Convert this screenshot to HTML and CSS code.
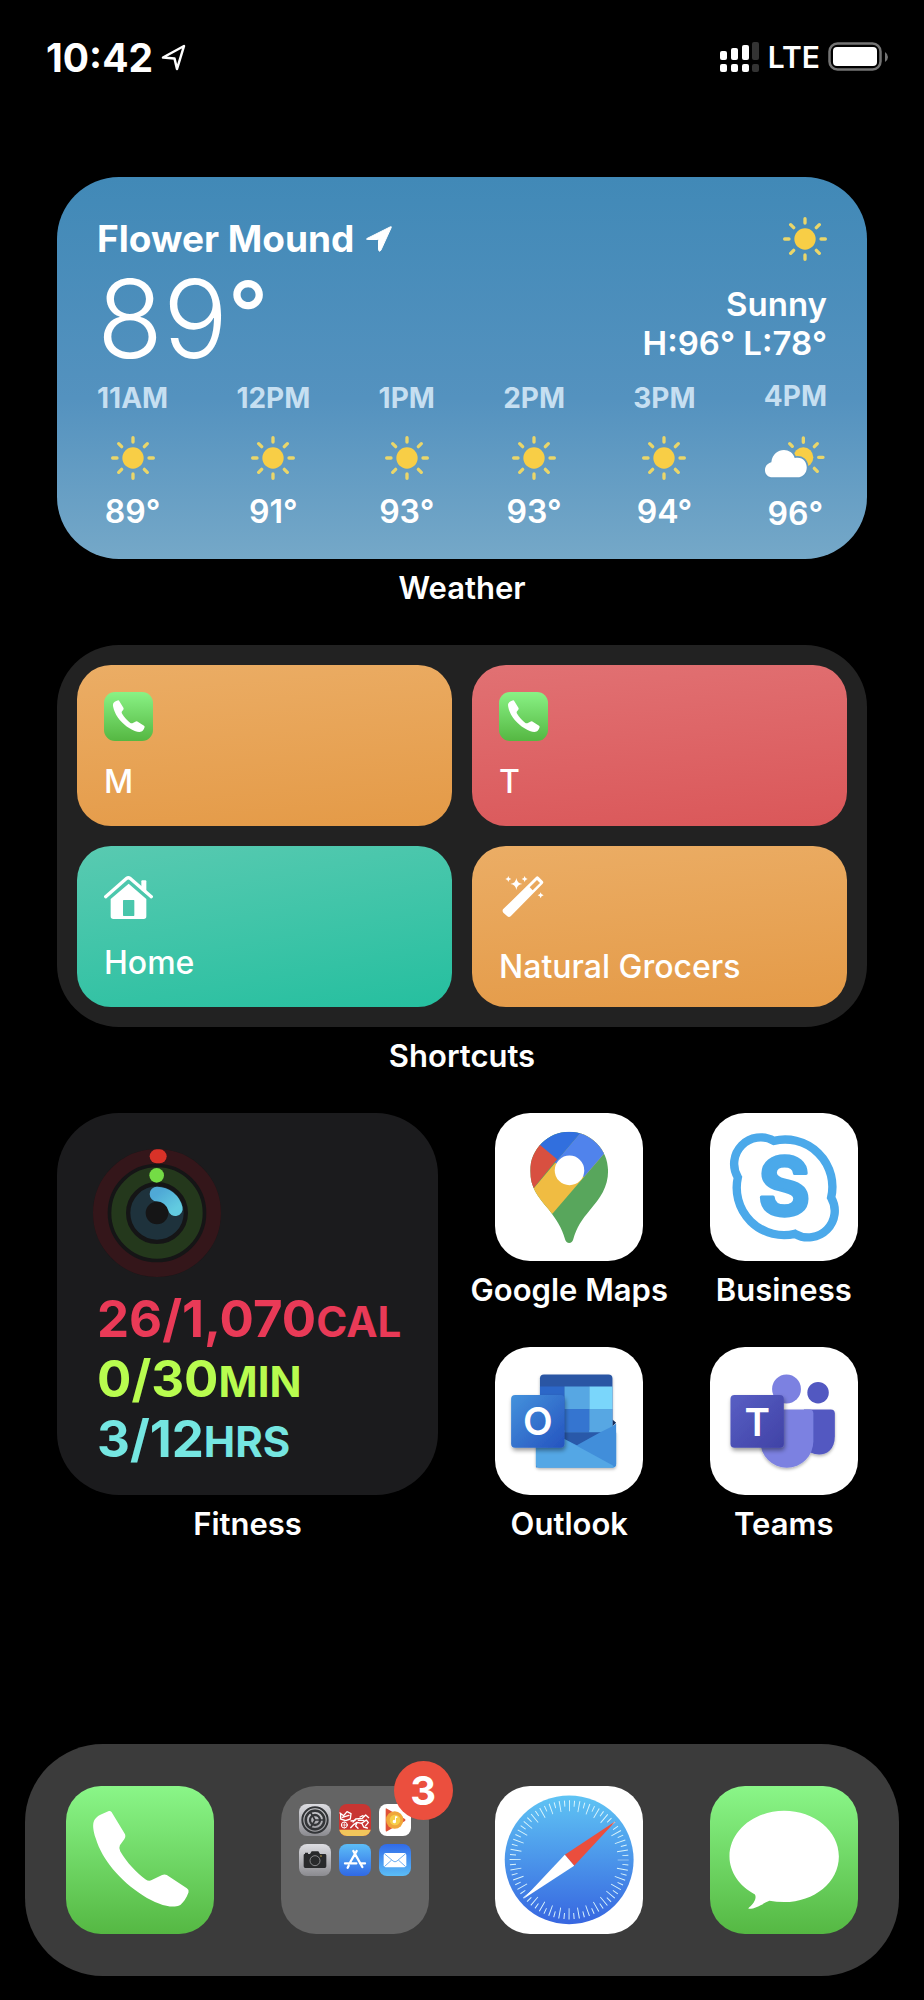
FILE: index.html
```html
<!DOCTYPE html>
<html lang="en">
<head>
  <meta charset="UTF-8" />
  <meta name="viewport" content="width=device-width, initial-scale=1.0"/>
  <title>Home Screen</title>
  <link rel="stylesheet" href="styles.css">
</head>
<body>
  <!-- shared shapes -->
  <svg class="defs" width="0" height="0" aria-hidden="true">
    <defs>
      <linearGradient id="safariBlue" x1="0" y1="0" x2="0" y2="1">
        <stop offset="0" stop-color="#5fc4f4"/>
        <stop offset="1" stop-color="#3766e0"/>
      </linearGradient>
      <linearGradient id="outlookBox" x1="0" y1="0" x2="1" y2="1">
        <stop offset="0" stop-color="#4492dc"/>
        <stop offset="1" stop-color="#2553bf"/>
      </linearGradient>
      <linearGradient id="teamsBox" x1="0" y1="0" x2="1" y2="1">
        <stop offset="0" stop-color="#585fc4"/>
        <stop offset="1" stop-color="#4042a6"/>
      </linearGradient>
      <linearGradient id="standRing" x1="0" y1="0" x2="1" y2="1">
        <stop offset="0" stop-color="#4fa9d6"/>
        <stop offset="1" stop-color="#62cbe0"/>
      </linearGradient>
      <filter id="boxShadow" x="-30%" y="-30%" width="160%" height="160%">
        <feDropShadow dx="3" dy="8" stdDeviation="7" flood-color="#000" flood-opacity="0.4"/>
      </filter>
      <filter id="baseShadow" x="-20%" y="-20%" width="140%" height="140%">
        <feDropShadow dx="0" dy="5" stdDeviation="4" flood-color="#000" flood-opacity="0.3"/>
      </filter>
      <clipPath id="pinShape">
        <path d="M327 96C391 96 443 148 443 212C443 262 419 293 389 329C364 359 350 379 339 417Q336 427 327 427Q318 427 315 417C304 379 290 359 265 326C233 288 211 262 211 212C211 148 263 96 327 96Z"/>
      </clipPath>
    </defs>
    <symbol id="sun" viewBox="0 0 132 132">
      <circle cx="66" cy="66" r="32" fill="#f8ce46"/>
      <path d="M66 5V18M66 114V127M5 66H18M114 66H127M23 23L32 32M100 100L109 109M109 23L100 32M23 109L32 100" stroke="#ead66a" stroke-width="10" stroke-linecap="round"/>
    </symbol>
    <symbol id="handset" viewBox="140 168 442 442">
      <path fill="#fff" d="M246 252L268 243Q272 241 276 246L315 310Q320 318 314 327L301 345Q297 353 302 363C322 398 350 426 378 447Q387 453 396 449L427 434Q434 430 441 434L501 473Q508 478 506 485C500 502 490 518 478 525C455 535 410 521 370 495C300 450 248 388 229 325C215 280 220 264 246 252Z"/>
    </symbol>
  </svg>

  <header class="status-bar">
    <div class="clock">
      <time>10:42</time>
      <svg width="25" height="27" viewBox="0 0 25 27"><path d="M2 13.500L23 2L16 25L13.500 14.500Z" fill="none" stroke="#fff" stroke-width="2.500" stroke-linejoin="round"/></svg>
    </div>
    <div class="signal">
      <svg width="40" height="30" viewBox="0 0 40 30">
        <g fill="#fff">
          <rect x="0" y="9" width="7" height="9" rx="2"/><rect x="11" y="6" width="7" height="12" rx="2"/><rect x="22" y="3" width="7" height="15" rx="2"/>
          <rect x="0" y="22" width="7" height="8" rx="2"/><rect x="11" y="22" width="7" height="8" rx="2"/><rect x="22" y="22" width="7" height="8" rx="2"/>
        </g>
        <g fill="#333"><rect x="32" y="0" width="7" height="18" rx="2"/><rect x="32" y="22" width="7" height="8" rx="2"/></g>
      </svg>
      <span>LTE</span>
      <svg width="61" height="30" viewBox="0 0 61 30">
        <rect x="1.500" y="1.500" width="51" height="26" rx="8" fill="none" stroke="#747474" stroke-width="2.500"/>
        <rect x="5" y="5" width="44" height="19" rx="4" fill="#fff"/>
        <path d="M57 10Q60 12 60 15Q60 18 57 20Z" fill="#747474"/>
      </svg>
    </div>
  </header>

  <main class="home">
    <section class="widget wide">
      <div class="widget-box weather">
        <div class="weather-top">
          <h1>Flower Mound
            <svg width="26" height="26" viewBox="0 0 26 26"><path d="M1 12.500L24 1Q26 0 25 2L15 24Q13 27 12.500 23V14.500Q12.500 13.500 11.500 13.500H3Q-1 13.500 1 12.500Z" fill="#fff" stroke="#fff" stroke-width="1"/></svg>
          </h1>
          <svg class="sun"><use href="#sun"/></svg>
        </div>
        <div class="weather-now">
          <div class="temperature">89<span class="degree">°</span></div>
          <div class="conditions">Sunny<br>H:96° L:78°</div>
        </div>
        <div class="hours">
          <div class="hour"><span>11AM</span><svg class="sun"><use href="#sun"/></svg><b>89°</b></div>
          <div class="hour"><span>12PM</span><svg class="sun"><use href="#sun"/></svg><b>91°</b></div>
          <div class="hour"><span>1PM</span><svg class="sun"><use href="#sun"/></svg><b>93°</b></div>
          <div class="hour"><span>2PM</span><svg class="sun"><use href="#sun"/></svg><b>93°</b></div>
          <div class="hour"><span>3PM</span><svg class="sun"><use href="#sun"/></svg><b>94°</b></div>
          <div class="hour"><span>4PM</span>
            <svg class="cloud" viewBox="918 788 180 144">
              <circle cx="1033" cy="858" r="30" fill="#f8ce46"/>
              <path d="M1033 800V813M992 817L1000 825M1075 817L1066 826M1079 858H1092M1066 891L1075 900" stroke="#ead66a" stroke-width="10" stroke-linecap="round"/>
              <path d="M941 918C912 918 910 880 937 873C942 828 997 825 1007 860C1052 850 1056 918 1014 918Z" fill="#fff" stroke="#629ac1" stroke-width="10" paint-order="stroke"/>
            </svg>
            <b>96°</b></div>
        </div>
      </div>
      <p class="caption">Weather</p>
    </section>

    <section class="widget wide">
      <div class="widget-box shortcuts">
        <button class="shortcut orange">
          <span class="phone-tile"><svg viewBox="0 0 49 49"><use href="#handset"/></svg></span>
          <span>M</span>
        </button>
        <button class="shortcut red">
          <span class="phone-tile"><svg viewBox="0 0 49 49"><use href="#handset"/></svg></span>
          <span>T</span>
        </button>
        <button class="shortcut teal">
          <svg class="glyph" viewBox="162 699 147 147">
            <path d="M274 750V724Q274 721 277 721H286Q289 721 289 724V762Z" fill="#fff"/>
            <path d="M167 770L230 715Q235 711 240 715L304 770" fill="none" stroke="#fff" stroke-width="10" stroke-linecap="round"/>
            <path fill-rule="evenodd" d="M236 731L289 777V829Q289 837 281 837H190Q182 837 182 829V777ZM221 780Q219 780 219 782V826Q219 828 221 828H251Q253 828 253 826V782Q253 780 251 780Z" fill="#fff"/>
          </svg>
          <span>Home</span>
        </button>
        <button class="shortcut orange">
          <svg class="glyph tall" viewBox="118 699 147 159">
            <g fill="#fff">
              <path fill-rule="evenodd" d="M130 808L229 711Q233 707 237 711L249 723Q253 727 249 731L153 829Q148 833 143 829L131 818Q127 813 130 808ZM210 742L219 751L241 729L232 720Z"/>
              <path d="M170 714Q172 730 188 732Q172 734 170 750Q168 734 152 732Q168 730 170 714Z"/>
              <path d="M146 708Q147 716 155 717Q147 718 146 726Q145 718 137 717Q145 716 146 708ZM195 708Q196 716 204 717Q196 718 195 726Q194 718 186 717Q194 716 195 708ZM243 757Q244 765 252 766Q244 767 243 775Q242 767 234 766Q242 765 243 757Z"/>
            </g>
          </svg>
          <span>Natural Grocers</span>
        </button>
      </div>
      <p class="caption">Shortcuts</p>
    </section>

    <section class="widget">
      <div class="widget-box fitness">
        <svg class="rings" viewBox="130 149 384 384" fill="none" stroke-linecap="round">
          <circle cx="322" cy="341" r="192" fill="#151516"/>
          <circle cx="322" cy="341" r="170" stroke="#34161a" stroke-width="44"/>
          <circle cx="322" cy="341" r="115" stroke="#24381c" stroke-width="44"/>
          <circle cx="322" cy="341" r="57" stroke="#1e323c" stroke-width="46"/>
          <path d="M321 171H330" stroke="#d93228" stroke-width="42"/>
          <circle cx="321" cy="228" r="22" fill="#74dc45"/>
          <path d="M322 284A57 57 0 0 1 377 328" stroke="url(#standRing)" stroke-width="44"/>
        </svg>
        <p class="move">26/1,070<small>CAL</small></p>
        <p class="exercise">0/30<small>MIN</small></p>
        <p class="stand">3/12<small>HRS</small></p>
      </div>
      <p class="caption">Fitness</p>
    </section>

    <a class="app" href="#">
      <svg class="icon white" viewBox="106 40 441 441">
        <g clip-path="url(#pinShape)">
          <rect x="200" y="80" width="260" height="360" fill="#58a65c"/>
          <path d="M360 100L290 183L200 290L277 340L432 160L450 80Z" fill="#f0bc42"/>
          <path d="M375 82L285 188L371 231L450 139V80Z" fill="#5083ec"/>
          <path d="M375 82L285 188L225 123V80Z" fill="#316fde"/>
          <path d="M242 137L291 178L205 283H190V110Z" fill="#d85040"/>
        </g>
        <circle cx="328" cy="211" r="44" fill="#fff"/>
      </svg>
      <span class="caption">Google Maps</span>
    </a>
    <a class="app" href="#">
      <svg class="icon white" viewBox="750 40 441 441">
        <path d="M833 232A79 79 0 0 1 940 123A141 141 0 0 1 1111 292A79 79 0 0 1 1003 400A141 141 0 0 1 833 232Z" fill="none" stroke="#4ba9ea" stroke-width="25"/>
        <text x="971" y="344" text-anchor="middle" class="logo-s">S</text>
      </svg>
      <span class="caption">Business</span>
    </a>
    <a class="app" href="#">
      <svg class="icon white" viewBox="106 52 441 441">
        <path d="M456 268L467 278L456 288Z" fill="#17305f"/>
        <g filter="url(#baseShadow)">
          <rect x="240" y="134" width="216" height="220" rx="12" fill="#2a57a4"/>
          <rect x="228" y="300" width="239" height="111" rx="10" fill="#54a7e5"/>
        </g>
        <path d="M240 170H313V306H240Z" fill="#2c67c8"/>
        <path d="M313 170H387V237H313Z" fill="#57a7e3"/>
        <path d="M387 170H456V237H387Z" fill="#7ad6fb"/>
        <path d="M313 237H387V306H313Z" fill="#3575d0"/>
        <path d="M387 237H456V306H387Z" fill="#57a7e3"/>
        <path d="M240 306H456V345H240Z" fill="#2959a9"/>
        <path d="M350 345L420 306L456 288L467 280V401Q467 411 457 411H228V285Z" fill="#418eda"/>
        <path d="M228 280L456 404Q462 408 457 411H238Q228 411 228 401Z" fill="#54a7e5"/>
        <rect x="154" y="195" width="159" height="157" rx="12" fill="url(#outlookBox)" filter="url(#boxShadow)"/>
        <text x="234" y="314" text-anchor="middle" class="logo-letter">O</text>
      </svg>
      <span class="caption">Outlook</span>
    </a>
    <a class="app" href="#">
      <svg class="icon white" viewBox="750 52 441 441">
        <circle cx="1072" cy="188" r="32" fill="#5258c1"/>
        <circle cx="978" cy="177" r="43" fill="#7c81e1"/>
        <g filter="url(#baseShadow)">
          <path d="M1030 238H1110Q1122 238 1122 250V318C1122 386 1052 382 1030 350Z" fill="#5258c1"/>
          <path d="M900 238H1046Q1058 238 1058 250V333A79 79 0 0 1 900 333Z" fill="#7c81e1"/>
        </g>
        <rect x="811" y="195" width="159" height="157" rx="12" fill="url(#teamsBox)" filter="url(#boxShadow)"/>
        <text x="891" y="317" text-anchor="middle" class="logo-letter">T</text>
      </svg>
      <span class="caption">Teams</span>
    </a>
  </main>

  <nav class="dock">
    <a class="app" href="#" aria-label="Phone">
      <svg class="icon green" viewBox="0 0 147 147"><use href="#handset"/></svg>
    </a>
    <a class="app" href="#" aria-label="Folder">
      <span class="icon folder">
        <svg class="mini grey" viewBox="0 0 96 96" fill="none" stroke="#333538">
          <circle cx="48" cy="48" r="38" stroke-width="6"/>
          <circle cx="48" cy="48" r="28" stroke-width="8"/>
          <circle cx="48" cy="48" r="15" stroke-width="7"/>
          <path d="M48 48H76M48 48L34 72M48 48L34 24" stroke-width="5"/>
          <circle cx="48" cy="48" r="33" stroke="#aaa" stroke-width="1"/>
        </svg>
        <svg class="mini coach" viewBox="0 0 96 96" fill="none" stroke="#fff" stroke-width="4" stroke-linecap="round" stroke-linejoin="round">
          <path d="M0 77H96V96H0Z" fill="#f1c65b" stroke="none"/>
          <path d="M3 27L14 35L24 23L36 29L34 45L20 50L5 45V28M10 40L30 34M36 51L48 49"/>
          <circle cx="16" cy="63" r="9" stroke-width="3"/>
          <path d="M16 54V72M7 63H25" stroke-width="2"/>
          <path d="M42 54L50 45L70 43L80 33L89 41M35 71L45 61L54 55L68 58L82 48L88 56L80 65M54 56L50 66L57 73M68 57L74 69L85 72M63 39L72 35M58 49H74"/>
        </svg>
        <svg class="mini white" viewBox="0 0 96 96">
          <path d="M20 15Q20 11 24 14L78 45Q81 48 78 51L24 82Q20 84 20 79Z" fill="#df5138"/>
          <circle cx="47" cy="48" r="26" fill="#f0a63a"/>
          <circle cx="48" cy="48" r="16" fill="#f6ce48"/>
          <path d="M48 53V37H55V42H51V53A5 5 0 1 1 48 48" fill="#fff"/>
        </svg>
        <svg class="mini grey" viewBox="0 0 96 96">
          <path d="M17 30H33L38 22H58L63 30H78Q82 30 82 34V67Q82 72 77 72H19Q14 72 14 67V34Q14 30 17 30ZM18 26H27V30H18Z" fill="#28292b"/>
          <circle cx="48" cy="50" r="15" fill="none" stroke="#b4b4b7" stroke-width="2"/>
          <circle cx="66" cy="36" r="2" fill="#f1bf45"/>
        </svg>
        <svg class="mini store" viewBox="0 0 96 96" fill="none" stroke="#fff" stroke-width="7" stroke-linecap="round">
          <path d="M43 21L70 69M53 21L34 54M29 65L26 71M18 58H52M63 58H78"/>
        </svg>
        <svg class="mini mail" viewBox="0 0 96 96">
          <rect x="14" y="27" width="68" height="43" rx="6" fill="#fff"/>
          <path d="M16 29L42 51Q48 56 54 51L80 29M16 68L38 48M80 68L58 48" fill="none" stroke="#6eaef0" stroke-width="3"/>
        </svg>
      </span>
      <span class="badge">3</span>
    </a>
    <a class="app" href="#" aria-label="Safari">
      <svg class="icon white" viewBox="106 168 441 441">
        <circle cx="327" cy="388" r="192" fill="url(#safariBlue)"/>
        <circle class="ticks" cx="327" cy="388" r="161" pathLength="360" stroke-width="33" stroke-dashoffset="0.500"/>
        <circle class="ticks" cx="327" cy="388" r="168" pathLength="360" stroke-width="18" stroke-dashoffset="5.500"/>
        <path d="M466 272L314 373L342 406Z" fill="#eb4e3d"/>
        <path d="M190 505L314 373L342 406Z" fill="#fff"/>
      </svg>
    </a>
    <a class="app" href="#" aria-label="Messages">
      <svg class="icon green" viewBox="750 168 441 441">
        <path d="M971 242C1061 242 1134 302 1134 378C1134 454 1061 514 971 514Q948 514 927 510C912 515 890 534 866 534Q862 533 867 529C880 519 890 502 884 491C838 467 808 424 808 378C808 302 881 242 971 242Z" fill="#fff"/>
      </svg>
    </a>
  </nav>
</body>
</html>
```
FILE: styles.css
```css
* {
  box-sizing: border-box;
}

body {
  margin: 0;
  min-height: 100vh;
  display: flex;
  flex-direction: column;
  background: #000;
  color: #fff;
  font-family: Inter, "Liberation Sans", sans-serif;
}

h1, p {
  margin: 0;
}

svg {
  display: block;
  flex-shrink: 0;
}

.defs {
  position: absolute;
}

/* status bar */
.status-bar {
  display: flex;
  justify-content: space-between;
  align-items: center;
  height: 114px;
  padding: 0 35px 0 46px;
}

.clock, .signal {
  display: flex;
  align-items: center;
  gap: 8px;
}

.clock {
  font-size: 39px;
  font-weight: 700;
}

.signal {
  font-size: 30px;
  font-weight: 600;
}

/* home grid */
.home {
  display: grid;
  grid-template-columns: repeat(4, 1fr);
  grid-auto-rows: 234px;
  padding: 63px 33px 0;
}

.widget {
  grid-column: span 2;
  grid-row: span 2;
  padding: 0 24px;
}

.wide {
  grid-column: span 4;
}

.widget-box {
  height: 382px;
  border-radius: 62px;
}

.caption {
  margin-top: 9px;
  font-size: 31px;
  line-height: 40px;
  font-weight: 600;
  text-align: center;
  white-space: nowrap;
}

/* weather */
.weather {
  padding: 40px 40px 0;
  background: linear-gradient(#4189b7, #5492bf 58%, #75a8c8);
}

.weather-top, .weather-now, .hours {
  display: flex;
  justify-content: space-between;
}

.weather-top {
  align-items: center;
}

.weather h1 {
  display: flex;
  align-items: center;
  gap: 12px;
  font-size: 37px;
  line-height: 44px;
}

.sun {
  width: 44px;
  height: 44px;
}

.temperature {
  font-size: 108px;
  line-height: 116px;
  font-weight: 300;
}

.degree {
  font-size: 88px;
  line-height: 1;
  font-weight: 500;
  vertical-align: 14px;
}

.conditions {
  padding-top: 24px;
  font-size: 33px;
  line-height: 39px;
  font-weight: 600;
  text-align: right;
}

.hours {
  align-items: center;
}

.hour {
  display: flex;
  flex-direction: column;
  align-items: center;
  font-size: 32px;
  line-height: 38px;
}

.hour span {
  margin-bottom: 19px;
  color: #c6dff1;
  font-size: 28px;
  font-weight: 700;
}

.hour b {
  margin-top: 13px;
  font-weight: 600;
}

.cloud {
  width: 60px;
  height: 48px;
}

/* shortcuts */
.shortcuts {
  display: grid;
  grid-template-columns: 1fr 1fr;
  grid-template-rows: 1fr 1fr;
  gap: 20px;
  padding: 20px;
  background: #222;
}

.shortcut {
  display: flex;
  flex-direction: column;
  align-items: flex-start;
  gap: 21px;
  padding: 27px 27px 16px;
  border: none;
  border-radius: 34px;
  color: #fff;
  font-family: inherit;
  font-size: 32px;
  line-height: 40px;
  font-weight: 500;
  cursor: pointer;
}

.orange {
  background: linear-gradient(175deg, #ebad65, #e49a47);
}

.red {
  background: linear-gradient(175deg, #e17173, #da5759);
}

.teal {
  background: linear-gradient(170deg, #59cab1, #25bf9f);
}

.phone-tile {
  width: 49px;
  height: 49px;
  border-radius: 11px;
  background: linear-gradient(#89f285, #55b742);
}

.glyph {
  width: 49px;
  height: 49px;
}

.tall {
  height: 53px;
}

/* fitness */
.fitness {
  padding: 36px;
  background: #1b1b1d;
}

.rings {
  width: 128px;
  height: 128px;
  margin-bottom: 12px;
}

.fitness p {
  padding-left: 4px;
  font-size: 51px;
  line-height: 60px;
  font-weight: 700;
  white-space: nowrap;
}

.fitness small {
  font-size: 42px;
  line-height: 1;
}

.move {
  color: #e93a57;
}

.exercise {
  color: #b8fc4f;
}

.stand {
  color: #75e6e1;
}

/* apps */
.app {
  position: relative;
  display: flex;
  flex-direction: column;
  align-items: center;
  color: #fff;
  text-decoration: none;
}

.icon {
  width: 148px;
  height: 148px;
  border-radius: 35px;
}

.white {
  background: #fff;
}

.green {
  background: linear-gradient(#8af688, #55b843);
}

.logo-s {
  font-size: 236px;
  font-weight: 700;
  fill: #4ba9ea;
  stroke: #4ba9ea;
  stroke-width: 10px;
  stroke-linejoin: round;
}

.logo-letter {
  font-size: 115px;
  font-weight: 600;
  fill: #fff;
}

/* dock */
.dock {
  display: grid;
  grid-template-columns: repeat(4, 1fr);
  margin: auto 25px 24px;
  padding: 42px 8px;
  border-radius: 78px;
  background: #3b3b3b;
}

.folder {
  display: grid;
  grid-template-columns: repeat(3, 32px);
  grid-auto-rows: 32px;
  gap: 8px;
  padding: 18px;
  background: #646464;
}

.mini {
  width: 32px;
  height: 32px;
  border-radius: 8px;
}

.grey {
  background: linear-gradient(#dddde2, #8b8b90);
}

.coach {
  background: #c83532;
}

.store {
  background: linear-gradient(#5cbdf7, #3069e6);
}

.mail {
  background: linear-gradient(#316be9, #5bbdf6);
}

.badge {
  position: absolute;
  top: -25px;
  left: 50%;
  width: 59px;
  margin-left: 39px;
  border-radius: 50%;
  background: #eb4f3e;
  font-size: 40px;
  line-height: 59px;
  font-weight: 700;
  text-align: center;
}

.ticks {
  fill: none;
  stroke: #d9f4fc;
  stroke-dasharray: 1 9;
}
```
